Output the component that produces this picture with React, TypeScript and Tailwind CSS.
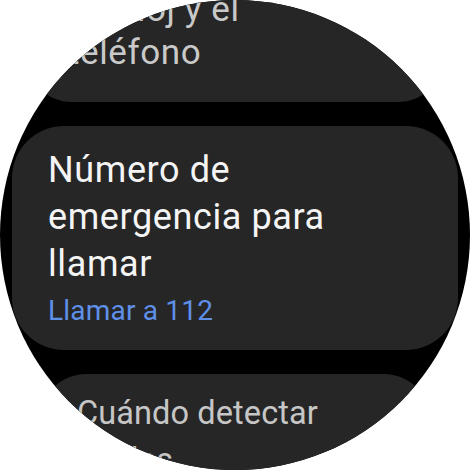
import React from "react";

export default function App() {
  return (
    <div className="w-[470px] h-[470px] bg-white" style={{ fontFamily: "Roboto, 'Noto Sans', sans-serif" }}>
      <div className="w-[470px] h-[470px] rounded-full bg-black overflow-hidden">
        <div className="flex flex-col gap-[24px] -mt-[75px]">
          <div className="mx-[26px] rounded-[46px] bg-[#262626] pt-[20px] pb-[28px] pl-[42px] pr-[30px]">
            <div className="text-[35px] leading-[43px] tracking-[0.6px] text-[#c9c9c9]">
              <div>Desconexión entre</div>
              <div>el reloj y el</div>
              <div>teléfono</div>
            </div>
          </div>
          <div className="mx-[12px] rounded-[52px] bg-[#262626] pt-[21px] pb-[21px] pl-[36px] pr-[30px]">
            <div className="text-[36px] leading-[47px] tracking-[0.6px] text-[#f4f4f4]">
              <div>Número de</div>
              <div>emergencia para</div>
              <div>llamar</div>
            </div>
            <div className="mt-[5px] text-[28px] leading-[36px] tracking-[0.2px] text-[#5f90e8]">
              Llamar a 112
            </div>
          </div>
          <div className="mx-[40px] rounded-[46px] bg-[#262626] pt-[16px] pb-[30px] pl-[37px] pr-[30px]">
            <div className="text-[32.5px] leading-[47px] tracking-[0.1px] text-[#c6c6c6]">
              <div>Cuándo detectar</div>
              <div>caídas</div>
            </div>
          </div>
        </div>
      </div>
    </div>
  );
}
